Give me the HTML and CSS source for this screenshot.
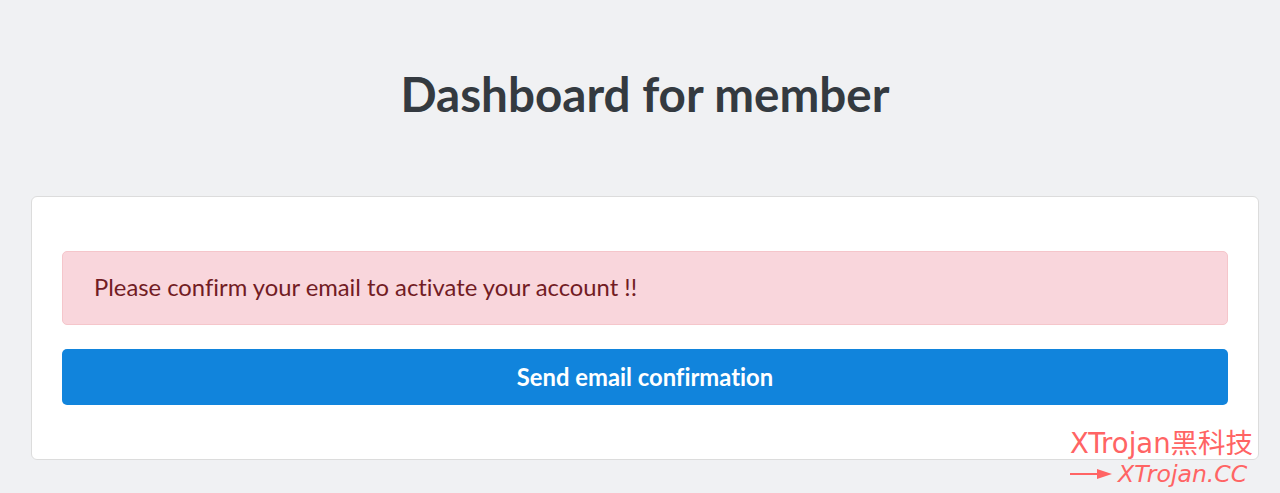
FILE: index.html
```html
<!DOCTYPE html>
<html lang="en">
<head>
    <meta charset="UTF-8">
    <meta name="viewport" content="width=device-width, initial-scale=1.0">
    <title>Dashboard for member</title>
    <link rel="stylesheet" href="styles.css">
</head>

<body>
    <div class="container">
        <h1>Dashboard for member</h1>

        <div class="card">
            <div class="alert">Please confirm your email to activate your account !!</div>
            <button class="send-btn" type="button">Send email confirmation</button>
        </div>
    </div>

    <div class="watermark">
        <div class="wm-title">XTrojan黑科技</div>
        <div class="wm-link">
            <svg class="wm-arrow" width="42" height="12" viewBox="0 0 42 12">
                <line x1="0" y1="6" x2="30" y2="6" stroke="#ff6464" stroke-width="2"/>
                <polygon points="27,1 42,6 27,11" fill="#ff6464"/>
            </svg>
            <span>XTrojan.CC</span>
        </div>
    </div>
</body>
</html>
```

FILE: styles.css
```css
body {
    font-family: Lato, 'Open Sans', sans-serif;
    font-variant-ligatures: none;
    background-color: #f0f1f3;
    color: #343a40;
    margin: 0;
    padding: 0;
}

.container {
    margin: 0 21px 0 31px;
}

h1 {
    text-align: center;
    color: #343a40;
    font-size: 47.6px;
    font-weight: 700;
    margin: 0;
    padding: 66px 0 74px;
    line-height: 56px;
}

.card {
    display: flex;
    flex-direction: column;
    gap: 24px;
    background-color: #fff;
    border: 1px solid #dcdcdc;
    border-radius: 6px;
    padding: 54px 30px 54px;
}

.alert {
    background-color: #f9d6dc;
    border: 1px solid #f5c6cb;
    color: #721c24;
    border-radius: 5px;
    padding: 0 31px;
    height: 72px;
    line-height: 71px;
    font-size: 23.8px;
}

.send-btn {
    background-color: #1184dc;
    color: #fff;
    border: none;
    border-radius: 5px;
    height: 56px;
    font-family: inherit;
    font-variant-ligatures: none;
    font-size: 23.8px;
    font-weight: 700;
    cursor: pointer;
}

/* overlay text in the lower right corner */
.watermark {
    position: absolute;
    left: 1070px;
    top: 426px;
    color: #ff6464;
    font-family: 'DejaVu Sans', 'Noto Sans CJK SC', sans-serif;
}

.wm-title {
    font-size: 27.5px;
    line-height: 34px;
}

.wm-link {
    display: flex;
    align-items: center;
    gap: 6px;
    font-size: 23.6px;
    line-height: 28px;
    font-style: italic;
}
```
